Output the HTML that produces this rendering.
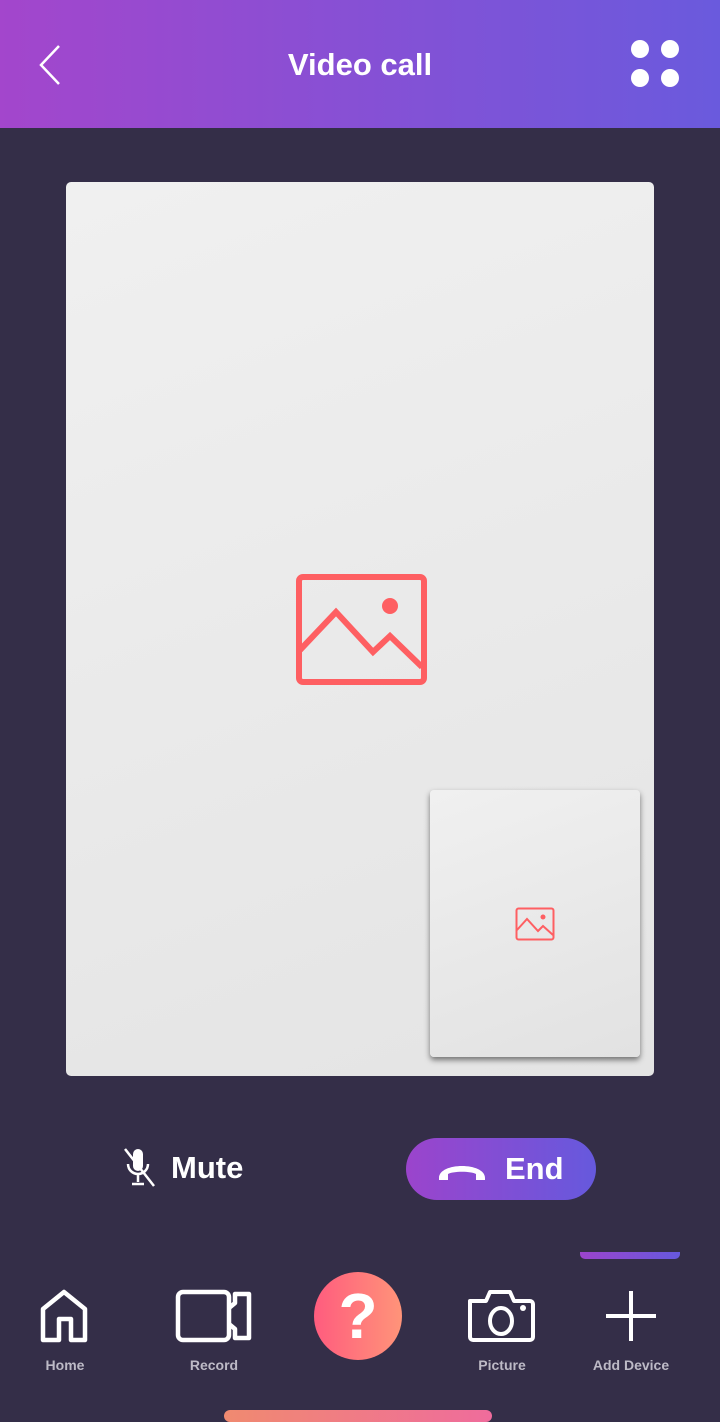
<!DOCTYPE html>
<html><head><meta charset="utf-8"><style>
body{margin:0;width:720px;height:1420px;background:#342e48;font-family:"Liberation Sans",sans-serif;position:relative;overflow:hidden}
.hdr{position:absolute;left:0;top:0;width:720px;height:128px;background:linear-gradient(90deg,#a346cc,#6a5add)}
.hdr .t{position:absolute;left:0;right:0;top:47px;text-align:center;color:#fff;font-size:31px;font-weight:bold}
.main{position:absolute;left:66px;top:182px;width:588px;height:894px;background:linear-gradient(160deg,#f0f0f0,#e4e4e4);border-radius:5px}
.pip{position:absolute;left:430px;top:790px;width:210px;height:267px;background:linear-gradient(160deg,#f0f0f0,#e2e2e2);border-radius:4px;box-shadow:0 3px 6px rgba(0,0,0,.5)}
.lbl{position:absolute;color:#bdbac6;font-size:14px;font-weight:bold;text-align:center;width:120px;top:1357px}
</style></head><body>
<div class="hdr">
<svg style="position:absolute;left:38px;top:44px" width="24" height="42"><path d="M21 2L3 21L21 40" stroke="#fff" stroke-width="2.5" fill="none"/></svg>
<div class="t">Video call</div>
<svg style="position:absolute;left:630px;top:38px" width="54" height="54"><circle cx="10" cy="11" r="9" fill="#fff"/><circle cx="40" cy="11" r="9" fill="#fff"/><circle cx="10" cy="40" r="9" fill="#fff"/><circle cx="40" cy="40" r="9" fill="#fff"/></svg>
</div>
<div class="main"></div>
<svg style="position:absolute;left:296px;top:574px" width="131" height="111"><rect x="3" y="3" width="125" height="105" rx="4" fill="none" stroke="#fe5f62" stroke-width="6"/><path d="M4 76L40 38L77 78L94 62L126 93" fill="none" stroke="#fe5f62" stroke-width="6"/><circle cx="94" cy="32" r="8" fill="#fe5f62"/></svg>
<div class="pip"></div>
<svg style="position:absolute;left:515px;top:907px" width="40" height="34"><rect x="1.5" y="1.5" width="37" height="31" rx="2" fill="none" stroke="#fe5f62" stroke-width="2"/><path d="M2 23L12 12L23 24L28 19L38 28" fill="none" stroke="#fe5f62" stroke-width="2"/><circle cx="28" cy="10" r="2.5" fill="#fe5f62"/></svg>
<svg style="position:absolute;left:122px;top:1146px" width="36" height="44"><rect x="11" y="3" width="10" height="22" rx="5" fill="#fff"/><path d="M6 18a10 10 0 0 0 20 0M16 28v8M10 38h12" stroke="#fff" stroke-width="2.5" fill="none"/><path d="M3 3L32 40" stroke="#fff" stroke-width="2.5"/></svg>
<div style="position:absolute;left:171px;top:1150px;color:#fff;font-size:31px;font-weight:bold">Mute</div>
<div style="position:absolute;left:406px;top:1138px;width:190px;height:62px;border-radius:31px;background:linear-gradient(90deg,#9b44cc,#6659dd)"></div>
<svg style="position:absolute;left:437px;top:1158px" width="50" height="24"><path d="M2 20C2 4 48 4 48 20V22H39V16C34 13 16 13 11 16V22H2Z" fill="#fff"/></svg>
<div style="position:absolute;left:505px;top:1151px;color:#fff;font-size:31px;font-weight:bold">End</div>
<div style="position:absolute;left:580px;top:1252px;width:100px;height:7px;border-radius:0 0 5px 5px;background:linear-gradient(90deg,#9b44cc,#6659dd)"></div>
<svg style="position:absolute;left:40px;top:1289px" width="50" height="54"><path d="M3 51V20L24 3L45 20V51H31V30H19V51Z" fill="none" stroke="#fff" stroke-width="4.5" stroke-linejoin="round"/></svg>
<svg style="position:absolute;left:175px;top:1289px" width="80" height="54"><rect x="3" y="3" width="51" height="48" rx="5" fill="none" stroke="#fff" stroke-width="4.5"/><path d="M54 19L60 14V5H74V49H60V40L54 35" fill="none" stroke="#fff" stroke-width="4.5" stroke-linejoin="round"/></svg>
<div style="position:absolute;left:314px;top:1272px;width:88px;height:88px;border-radius:50%;background:linear-gradient(90deg,#ff5c7e,#ff9479);color:#fff;font-size:64px;font-weight:bold;text-align:center;line-height:88px">?</div>
<svg style="position:absolute;left:466px;top:1289px" width="70" height="54"><path d="M4 12H20L24 3H44L48 12H64a3 3 0 0 1 3 3V48a3 3 0 0 1-3 3H7a3 3 0 0 1-3-3Z" fill="none" stroke="#fff" stroke-width="4" stroke-linejoin="round"/><ellipse cx="35" cy="32" rx="11" ry="13" fill="none" stroke="#fff" stroke-width="4"/><circle cx="57" cy="19" r="3" fill="#fff"/></svg>
<svg style="position:absolute;left:604px;top:1289px" width="54" height="54"><path d="M27 2V52M2 27H52" stroke="#fff" stroke-width="4"/></svg>
<div class="lbl" style="left:5px">Home</div>
<div class="lbl" style="left:154px">Record</div>
<div class="lbl" style="left:442px">Picture</div>
<div class="lbl" style="left:571px">Add Device</div>
<div style="position:absolute;left:224px;top:1410px;width:268px;height:12px;border-radius:6px;background:linear-gradient(90deg,#f08a70,#ef6c9c)"></div>
</body></html>
